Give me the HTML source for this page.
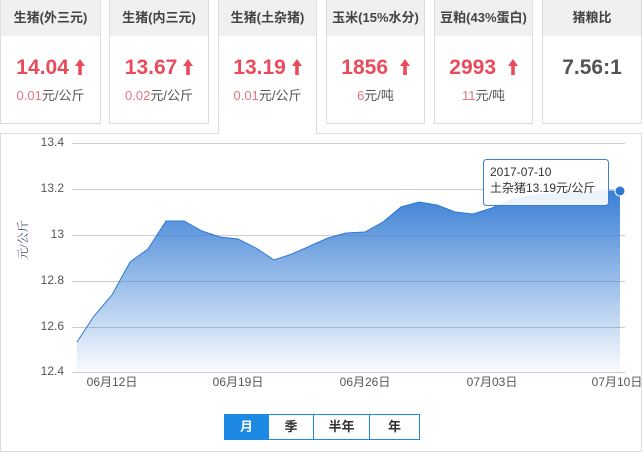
<!DOCTYPE html><html><head><meta charset="utf-8"><style>
body{margin:0;width:642px;height:452px;background:#fff;font-family:"Liberation Sans","Noto Sans CJK SC",sans-serif;position:relative;overflow:hidden}
.c{position:absolute;top:0;height:124px;border:1px solid #ddd;border-top:none;box-sizing:border-box;background:#fff;text-align:center}
.h{height:36px;background:#f0f0f0;line-height:36px;font-size:13px;color:#444;font-weight:bold}
.v{margin-top:19px;font-size:21px;font-weight:bold;color:#e94b5a;height:26px;line-height:26px}
.s{font-size:13px;color:#555;margin-top:4px}
.s b{font-weight:normal;color:#e9737a}
.ar{display:inline-block;width:10px;height:16px;vertical-align:-1px}
.panel{position:absolute;left:0;top:133px;width:642px;height:319px;border:1px solid #ddd;box-sizing:border-box}
.btns{position:absolute;left:224px;top:414px;display:flex;border:1px solid #1e88e5;height:26px;box-sizing:border-box}
.btns div{height:24px;line-height:24px;text-align:center;font-size:13px;color:#333;border-left:1px solid #1e88e5;font-weight:bold}
</style></head><body>
<div class="c" style="left:0;width:101px"><div class="h">生猪(外三元)</div><div class="v">14.04 <svg class="ar" viewBox="0 0 10 16"><path d="M5,0 L10,7 H6.8 V16 H3.2 V7 H0Z" fill="#e94b5a"/></svg></div><div class="s"><b>0.01</b>元/公斤</div></div>
<div class="c" style="left:109px;width:100px"><div class="h">生猪(内三元)</div><div class="v">13.67 <svg class="ar" viewBox="0 0 10 16"><path d="M5,0 L10,7 H6.8 V16 H3.2 V7 H0Z" fill="#e94b5a"/></svg></div><div class="s"><b>0.02</b>元/公斤</div></div>
<div class="c" style="left:218px;width:99px;height:134px;border-bottom:none;z-index:2"><div class="h">生猪(土杂猪)</div><div class="v">13.19 <svg class="ar" viewBox="0 0 10 16"><path d="M5,0 L10,7 H6.8 V16 H3.2 V7 H0Z" fill="#e94b5a"/></svg></div><div class="s"><b>0.01</b>元/公斤</div></div>
<div class="c" style="left:326px;width:99px"><div class="h">玉米(15%水分)</div><div class="v">1856 &nbsp;<svg class="ar" viewBox="0 0 10 16"><path d="M5,0 L10,7 H6.8 V16 H3.2 V7 H0Z" fill="#e94b5a"/></svg></div><div class="s"><b>6</b>元/吨</div></div>
<div class="c" style="left:434px;width:99px"><div class="h">豆粕(43%蛋白)</div><div class="v">2993 &nbsp;<svg class="ar" viewBox="0 0 10 16"><path d="M5,0 L10,7 H6.8 V16 H3.2 V7 H0Z" fill="#e94b5a"/></svg></div><div class="s"><b>11</b>元/吨</div></div>
<div class="c" style="left:542px;width:100px"><div class="h">猪粮比</div><div class="v" style="color:#555">7.56:1</div></div>
<div class="panel"></div>
<svg style="position:absolute;left:0;top:0" width="642" height="452">
<defs><linearGradient id="g" x1="0" y1="0" x2="0" y2="1"><stop offset="0" stop-color="#3a7fd5"/><stop offset="1" stop-color="#3a7fd5" stop-opacity="0.03"/></linearGradient></defs>
<g stroke="#ccc" stroke-width="1">
<line x1="72" y1="143.5" x2="625" y2="143.5"/><line x1="72" y1="189.5" x2="625" y2="189.5"/><line x1="72" y1="235.5" x2="625" y2="235.5"/><line x1="72" y1="281.5" x2="625" y2="281.5"/><line x1="72" y1="327.5" x2="625" y2="327.5"/><line x1="72" y1="372.5" x2="625" y2="372.5"/></g>
<path d="M77,342 L94,316 112,295 130,262 148,249 166,221 184,221 202,231 220,237 238,239 256,248 274,260 292,254 310,246 328,238 346,233 365,232 383,222 401,207 419,202 437,205 455,212 473,214 492,208 510,200 528,196 546,194 564,193 582,192 600,191 620,191 L620,372 L77,372Z" fill="url(#g)"/>
<path d="M77,342 L94,316 112,295 130,262 148,249 166,221 184,221 202,231 220,237 238,239 256,248 274,260 292,254 310,246 328,238 346,233 365,232 383,222 401,207 419,202 437,205 455,212 473,214 492,208 510,200 528,196 546,194 564,193 582,192 600,191 620,191" fill="none" stroke="#2e78d2" stroke-width="1"/>
<circle cx="620" cy="191" r="5" fill="#2e78d2" stroke="#fff" stroke-width="1"/>
<g font-size="12" fill="#555" text-anchor="end"><text x="64" y="146">13.4</text><text x="64" y="192">13.2</text><text x="64" y="238">13</text><text x="64" y="284">12.8</text><text x="64" y="330">12.6</text><text x="64" y="375">12.4</text></g>
<g font-size="12" fill="#555" text-anchor="middle"><text x="112" y="386">06月12日</text><text x="238" y="386">06月19日</text><text x="365" y="386">06月26日</text><text x="492" y="386">07月03日</text><text x="617" y="386">07月10日</text></g>
<text transform="translate(27,240) rotate(-90)" font-size="12" fill="#456" text-anchor="middle" font-family="Liberation Serif,Noto Serif CJK SC,serif">元/公斤</text>
<rect x="483.5" y="159.5" width="125" height="46" rx="3" fill="#fff" fill-opacity="0.9" stroke="#3a7fd5"/>
<text x="490" y="176" font-size="12" fill="#333">2017-07-10</text><text x="490" y="192" font-size="12" fill="#333">土杂猪13.19元/公斤</text>
</svg>
<div class="btns"><div style="width:43px;border:none;background:#1e88e5;color:#fff">月</div><div style="width:44px">季</div><div style="width:55px">半年</div><div style="width:49px">年</div></div>
</body></html>
